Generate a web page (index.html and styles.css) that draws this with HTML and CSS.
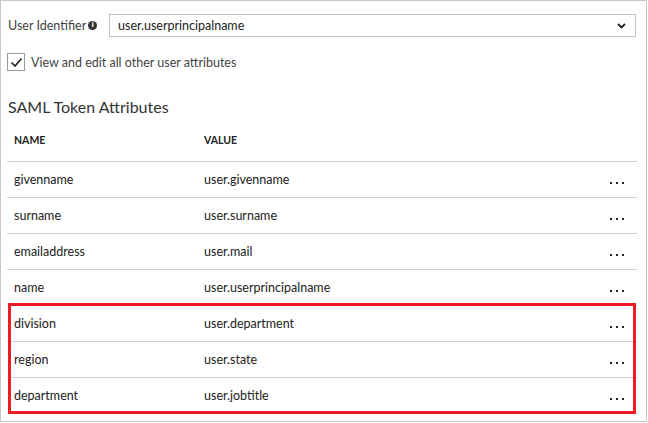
FILE: index.html
```html
<!DOCTYPE html>
<html>
<head>
<meta charset="utf-8">
<link rel="stylesheet" href="styles.css">
</head>
<body>
<div class="frame">
  <div class="id-row">
    <div class="id-label">User Identifier <span class="info">i</span></div>
    <div class="select">
      <span>user.userprincipalname</span>
      <svg class="chev" width="9" height="6" viewBox="0 0 9 6"><path d="M1 1 L4.5 4.5 L8 1" fill="none" stroke="#222" stroke-width="1.8"/></svg>
    </div>
  </div>
  <div class="check-row">
    <span class="checkbox"><svg width="13" height="11" viewBox="0 0 13 11"><path d="M1.5 5.5 L5 9 L11.5 1.5" fill="none" stroke="#222" stroke-width="1.6"/></svg></span>
    <span class="check-label">View and edit all other user attributes</span>
  </div>
  <h2 class="title">SAML Token Attributes</h2>
  <div class="table">
    <div class="row head"><span>NAME</span><span>VALUE</span><span></span></div>
    <div class="row"><span>givenname</span><span>user.givenname</span><span class="more"><i></i><i></i><i></i></span></div>
    <div class="row"><span>surname</span><span>user.surname</span><span class="more"><i></i><i></i><i></i></span></div>
    <div class="row"><span>emailaddress</span><span>user.mail</span><span class="more"><i></i><i></i><i></i></span></div>
    <div class="row"><span>name</span><span>user.userprincipalname</span><span class="more"><i></i><i></i><i></i></span></div>
    <div class="row"><span>division</span><span>user.department</span><span class="more"><i></i><i></i><i></i></span></div>
    <div class="row"><span>region</span><span>user.state</span><span class="more"><i></i><i></i><i></i></span></div>
    <div class="row"><span>department</span><span>user.jobtitle</span><span class="more"><i></i><i></i><i></i></span></div>
    <div class="highlight"></div>
  </div>
</div>
</body>
</html>
```
FILE: styles.css
```css
* { box-sizing: border-box; }
html, body { margin: 0; padding: 0; background: #fff; }
body { font-family: "Segoe UI", Lato, "Noto Sans", sans-serif; color: #333; }
.frame {
  width: 647px;
  height: 422px;
  border: 1px solid #c8c8c8;
  padding: 13px 10px 0 6px;
  overflow: hidden;
}
.id-row { display: flex; align-items: center; height: 23px; }
.id-label {
  width: 102px;
  padding-left: 1px;
  font-size: 12.5px;
  color: #444;
  display: flex;
  align-items: center;
  gap: 2px;
  white-space: nowrap;
}
.info {
  display: inline-flex;
  width: 9px; height: 9px;
  border-radius: 50%;
  background: #333;
  color: #fff;
  font-size: 7px;
  font-weight: bold;
  align-items: center;
  justify-content: center;
  line-height: 1;
  font-family: "DejaVu Sans", sans-serif;
}
.select {
  width: 527px;
  height: 23px;
  border: 1px solid #c2c2c2;
  display: flex;
  align-items: center;
  justify-content: space-between;
  padding: 0 9px 0 8px;
  font-size: 12.5px;
  color: #222;
}
.check-row { display: flex; align-items: center; margin-top: 16px; height: 18px; gap: 6px; padding-left: 0; }
.checkbox {
  width: 18px; height: 18px;
  border: 1px solid #999;
  display: flex; align-items: center; justify-content: center;
}
.check-label { font-size: 12.5px; color: #444; }
.title {
  margin: 25px 0 0 1px;
  font-size: 16px;
  font-weight: normal;
  color: #333;
  line-height: 22px;
}
.table { position: relative; width: 630px; margin-top: 0; }
.row {
  display: grid;
  grid-template-columns: 190px 1fr 40px;
  align-items: center;
  height: 36px;
  border-bottom: 1px solid #cfcfcf;
  padding-left: 7px;
  font-size: 12.5px;
  color: #222;
}
.row.head { height: 44px; font-size: 10.5px; font-weight: bold; color: #222; padding-top: 0; }
.more { display: flex; gap: 4px; padding-top: 6px; padding-left: 13px; }
.more i { display: block; width: 2px; height: 2px; background: #222; }
.highlight {
  position: absolute;
  left: 1px; right: 1px;
  top: 185px;
  height: 111px;
  border: 3px solid #ed1c24;
}
```
